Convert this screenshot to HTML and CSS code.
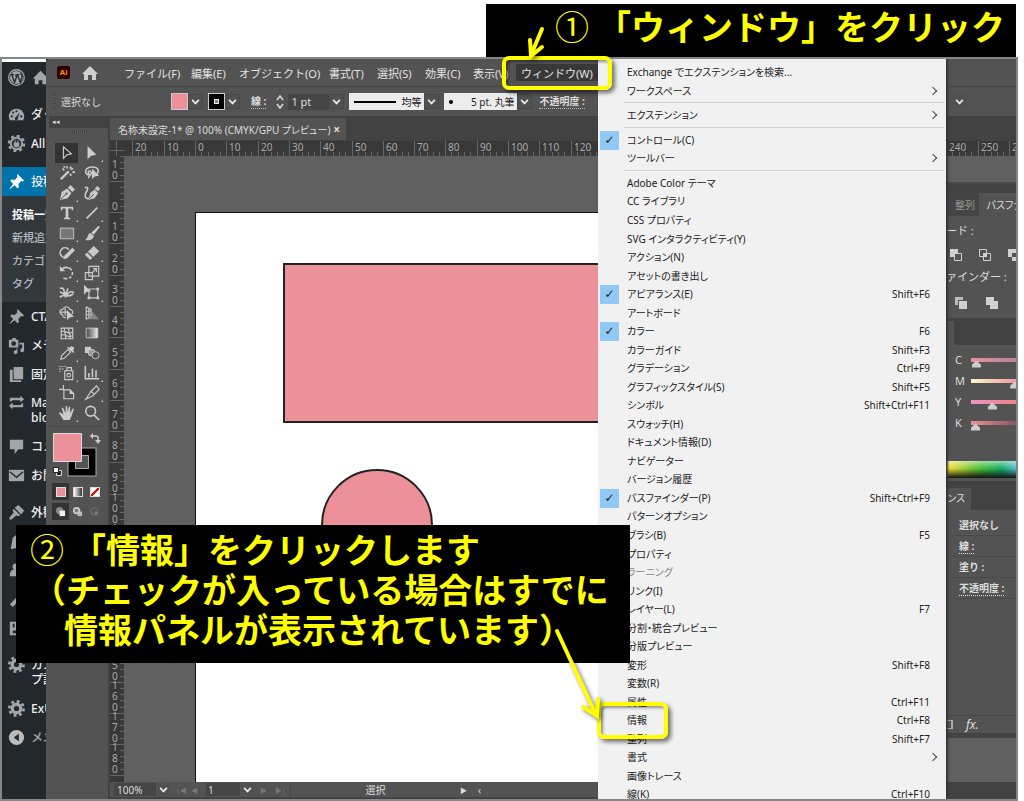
FILE: index.html
```html
<!DOCTYPE html>
<html lang="ja">
<head>
<meta charset="utf-8">
<title>情報パネルの表示</title>
<link rel="stylesheet" href="styles.css">
</head>
<body>
<main class="stage">
<div class="frame">
<nav class="wp">
  <a class="wp-row wp-top" href="#"><svg class="wi" viewBox="0 0 20 20"><circle cx="10" cy="10" r="8.2" fill="none" stroke="#a0a5aa" stroke-width="1.4"/><circle cx="10" cy="10" r="6.8" fill="#a0a5aa"/><path d="M3.5 7h4M9 7h4M5 7l3 8 2-5.500L9 7M11 7l3 8 2-6c0-2-1.500-2-1.500-4" fill="none" stroke="#23282d" stroke-width="1.400"/></svg><svg class="wi" viewBox="0 0 20 20"><path fill="#a0a5aa" d="M10 3l8 8h-2v6h-4v-4H8v4H4v-6H2z"/></svg></a>
  <a class="wp-row wp-dash" href="#"><svg class="wi" viewBox="0 0 20 20"><path fill="#a0a5aa" d="M10 4a8 8 0 0 0-7 12h14a8 8 0 0 0-7-12z"/><g fill="#23282d"><circle cx="5" cy="12" r="1.100"/><circle cx="6.500" cy="8" r="1.100"/><circle cx="10" cy="6.500" r="1.100"/><circle cx="15" cy="12" r="1.100"/><path d="M13.500 7.500l-2 6a1.700 1.700 0 1 1-2-1z"/></g></svg>ダッシュ</a>
  <a class="wp-row" href="#"><svg class="wi" viewBox="0 0 20 20"><circle cx="10" cy="10" r="6" fill="none" stroke="#a0a5aa" stroke-width="2"/><circle cx="10" cy="10" r="8" fill="none" stroke="#a0a5aa" stroke-width="2.500" stroke-dasharray="3.200 3.080"/><path fill="#a0a5aa" d="M7 9h6v2a3 3 0 0 1-6 0zM8 6h1v3H8zM11 6h1v3h-1z"/></svg>All in</a>
  <a class="wp-row wp-active" href="#"><svg class="wi" viewBox="0 0 20 20"><path fill="#fff" d="M11 2l7 7-1.500 1-1.500-.5-3 3 .5 3.500-1.500 1-3-3-5 4-.5-.5 4-5-3-3 1-1.500 3.500.5 3-3-.5-1.500z"/></svg>投稿</a>
  <div class="wp-sub"><a class="on" href="#">投稿一覧</a><a href="#">新規追加</a><a href="#">カテゴリー</a><a href="#">タグ</a></div>
  <a class="wp-row" href="#"><svg class="wi" viewBox="0 0 20 20"><path fill="#a0a5aa" d="M11 2l7 7-1.500 1-1.500-.5-3 3 .5 3.500-1.500 1-3-3-5 4-.5-.5 4-5-3-3 1-1.500 3.500.5 3-3-.5-1.500z"/></svg>CTA</a>
  <a class="wp-row" href="#"><svg class="wi" viewBox="0 0 20 20"><path fill="#a0a5aa" fill-rule="evenodd" d="M2 4h3l1-2h3l1 2h2v8H2zM7 5.500a2.500 2.500 0 1 0 0 5 2.500 2.500 0 0 0 0-5zM13 7h5v8a2 2 0 1 1-2-2V9h-3zM11 13v4a2 2 0 1 1-2-2h1v-2z"/></svg>メディア</a>
  <a class="wp-row" href="#"><svg class="wi" viewBox="0 0 20 20"><path fill="#a0a5aa" d="M7 2h10v13H7zM3 5h3v11h9v2H3z"/></svg>固定</a>
  <a class="wp-row wp-two" href="#"><svg class="wi" viewBox="0 0 20 20"><path fill="#a0a5aa" d="M3 9V5h11V3l4 3.500-4 3.500V7.500H5V9zM17 11v4H6v2l-4-3.500L6 10v2.500h9V11z"/></svg><span>Max<br>block</span></a>
  <a class="wp-row" href="#"><svg class="wi" viewBox="0 0 20 20"><path fill="#a0a5aa" d="M3 3h14v10h-5l-4 5v-5H3z"/></svg>コメント</a>
  <a class="wp-row" href="#"><svg class="wi" viewBox="0 0 20 20"><path fill="#a0a5aa" d="M2 4h16v12H2z"/><path d="M3 6l7 6 7-6" fill="none" stroke="#23282d" stroke-width="1.500"/></svg>お問</a>
  <a class="wp-row wp-gap" href="#"><svg class="wi" viewBox="0 0 20 20"><path fill="#a0a5aa" d="M12 2l6 6-3 4-7-7zM7 6l7 7-2 1-2-1-6 5-2-2 5-6-1-2z"/></svg>外観</a>
  <a class="wp-row" href="#" aria-label="プラグイン"><svg class="wi" viewBox="0 0 20 20"><path fill="#a0a5aa" d="M4 18l2-12 4-3 5 5v8z"/></svg></a>
  <a class="wp-row" href="#" aria-label="ユーザー"><svg class="wi" viewBox="0 0 20 20"><path fill="#a0a5aa" d="M10 3a3 3 0 0 1 2 6c4 0 5 3 5 7H3c0-4 1-7 5-7a3 3 0 0 1 2-6z"/></svg></a>
  <a class="wp-row" href="#" aria-label="ツール"><svg class="wi" viewBox="0 0 20 20"><path fill="#a0a5aa" d="M3 15l7-7a4 4 0 0 1 5-5l-2 3 2 2 3-2a4 4 0 0 1-5 5l-7 7z"/></svg></a>
  <a class="wp-row" href="#" aria-label="設定"><svg class="wi" viewBox="0 0 20 20"><path fill="#a0a5aa" fill-rule="evenodd" d="M3 3h14v14H3zM6 5v4h2V5zM6 12v3h8v-3z"/></svg></a>
  <a class="wp-row wp-two wp-gap" href="#"><svg class="wi" viewBox="0 0 20 20"><circle cx="10" cy="10" r="4.500" fill="none" stroke="#a0a5aa" stroke-width="3.500"/><circle cx="10" cy="10" r="7.500" fill="none" stroke="#a0a5aa" stroke-width="2.800" stroke-dasharray="3 2.890"/></svg><span>カス<br>プ設</span></a>
  <a class="wp-row" href="#"><svg class="wi" viewBox="0 0 20 20"><circle cx="10" cy="10" r="4.500" fill="none" stroke="#a0a5aa" stroke-width="3.500"/><circle cx="10" cy="10" r="7.500" fill="none" stroke="#a0a5aa" stroke-width="2.800" stroke-dasharray="3 2.890"/></svg>ExU</a>
  <a class="wp-row wp-dim" href="#"><svg class="wi" viewBox="0 0 20 20"><circle cx="10" cy="10" r="8" fill="#bbb"/><path d="M12.500 6v8L7 10z" fill="#23282d"/></svg>メニュー</a>
</nav>

<section class="app">
  <header class="menubar">
    <span class="ai">Ai</span>
    <button class="home" aria-label="ホーム"><svg width="18" height="16" viewBox="0 0 18 16"><path fill="#d0d0d0" d="M9 1l8 8h-2v6h-4v-5H7v5H3V9H1z"/></svg></button>
    <div class="menus"><button>ファイル(F)</button><button>編集(E)</button><button>オブジェクト(O)</button><button>書式(T)</button><button>選択(S)</button><button>効果(C)</button><button>表示(V)</button><button class="open">ウィンドウ(W)</button></div>
  </header>

  <div class="control">
    <span class="grip"></span><span class="nosel">選択なし</span>
    <button class="sw pink" aria-label="塗り"></button><button class="chev" aria-label="塗りを選択"></button>
    <button class="sw dark" aria-label="線の色"></button><button class="chev" aria-label="線の色を選択"></button>
    <label class="dotted" for="pt">線 :</label>
    <svg class="step" width="8" height="16" viewBox="0 0 8 16"><path d="M1 6l3-4 3 4M1 10l3 4 3-4" fill="none" stroke="#ddd" stroke-width="1.500"/></svg>
    <input id="pt" class="pt" value="1 pt"><button class="chev" aria-label="線幅"></button>
    <button class="profile"><i></i>均等</button><button class="chev" aria-label="プロファイル"></button>
    <button class="brush"><b></b>5 pt. 丸筆</button><button class="chev" aria-label="ブラシ"></button>
    <span class="dotted op">不透明度 :</span>
    <button class="chev far" aria-label="整列"></button>
  </div>

  <div class="work">
    <aside class="tools">
      <div class="tools-head">◂◂</div>
      <div class="tools-grip"></div>
      <div class="grid">
        <button class="t sel" aria-label="選択"><svg viewBox="0 0 18 18"><path d="M5 2v13l4-4 5-1z" class="o"/></svg></button>
        <button class="t c" aria-label="ダイレクト選択"><svg viewBox="0 0 18 18"><path d="M4 1v15l4-4 6-1z" class="f"/></svg></button>
        <button class="t" aria-label="自動選択"><svg viewBox="0 0 18 18"><path d="M2 16L11 7" class="o w3"/><path d="M9 1v3M15 8h3M14 2l-2 2M4 4l2 2M14 12l-2-2M6 1v2M13 5l3-1" class="o w2"/></svg></button>
        <button class="t" aria-label="なげなわ"><svg viewBox="0 0 18 18"><path d="M8 11c-5 1-7-2-6-5 2-5 13-5 14 0 0 2 0 3-2 5M6 10c-3-2 0-5 2-2s-3 3-3 7" class="o w2"/><path d="M9 4v12l3-3 5-1z" class="f"/></svg></button>
        <button class="t c" aria-label="ペン"><svg viewBox="0 0 18 18"><path d="M1 17l2-9 6-4 5 5-4 6zM10 3l3-3 5 5-3 3z" class="f"/><path d="M2 16l6-6" stroke="#535353"/><circle cx="8.500" cy="9.500" r="1.200" fill="#535353"/></svg></button>
        <button class="t" aria-label="曲線"><svg viewBox="0 0 18 18"><path d="M5 17l2-8 5-4 4 4-4 6zM12 4l3-3 3 3-2 3z" class="f"/><path d="M1 3c5-2 3 3 1 6-2 5 1 7 4 6" class="o w2"/><path d="M6 16l5-6" stroke="#535353"/></svg></button>
        <button class="t c" aria-label="文字"><svg viewBox="0 0 18 18"><path d="M2 2h14v4h-1.500L14 4h-3.500v10l2 .5V16h-7v-1.500l2-.5V4H4l-.5 2H2z" class="f"/></svg></button>
        <button class="t c" aria-label="直線"><svg viewBox="0 0 18 18"><path d="M3 15L15 3" class="o w2"/></svg></button>
        <button class="t c" aria-label="長方形"><svg viewBox="0 0 18 18"><path d="M1.500 3.500h15v12h-15z" fill="#777" stroke="#ccc"/></svg></button>
        <button class="t c" aria-label="ブラシ"><svg viewBox="0 0 18 18"><path d="M16 1l2 1-7 9-3-2zM7 9l4 3c0 4-5 6-10 5 3-1 3-7 6-8z" class="f"/></svg></button>
        <button class="t c" aria-label="Shaper"><svg viewBox="0 0 18 18"><path d="M10 13a5.500 5.500 0 1 1 1-8" class="o w2"/><path d="M5 16l1-4L15 3l3 3-9 9z" class="f"/></svg></button>
        <button class="t c" aria-label="消しゴム"><svg viewBox="0 0 18 18"><path d="M1 11L11 1l6 6-10 10z" class="f"/><path d="M4 8l6 6" stroke="#535353" stroke-width="1.500"/></svg></button>
        <button class="t c" aria-label="回転"><svg viewBox="0 0 18 18"><path d="M3 5c5-5 13-1 12 5-1 5-6 6-10 5" class="o w2" stroke-dasharray="13 2 3 2 3 2"/><path d="M1 1v6h6z" class="f"/></svg></button>
        <button class="t c" aria-label="拡大・縮小"><svg viewBox="0 0 18 18"><path d="M1.500 8.500h8v8h-8zM5.500 1.500h11v11h-11zM9 9l5-5M10 4h4v4" class="o"/></svg></button>
        <button class="t c" aria-label="線幅"><svg viewBox="0 0 18 18"><path d="M1 4c4-2 5 2 5 5s2 4 4 1 5-3 7-1M1 14c4-6 9 2 15-4M10 4l-3 10M1 8l5 2" class="o w2"/><circle cx="7" cy="10" r="2.500" class="f"/></svg></button>
        <button class="t c" aria-label="自由変形"><svg viewBox="0 0 18 18"><path d="M5.500 4.500h10v10h-10z" class="o"/><path d="M0 0v11l3-3 5-1zM14 3h3v3h-3zM14 13h3v3h-3zM4 13h3v3H4z" class="f"/></svg></button>
        <button class="t c" aria-label="シェイプ形成"><svg viewBox="0 0 18 18"><path d="M8 14c-2 1-4-1-4-3-4-1-4-6 0-6 2-4 7-4 8 0 3 0 4 2 3 5M1 8h9M7 3v9" class="o"/><path d="M9 6v11l3-3 5-1z" class="f"/></svg></button>
        <button class="t c" aria-label="遠近"><svg viewBox="0 0 18 18"><path d="M2.500 2v14M2 2l6 3v9l-6 2M5.500 4v11M2 7h6M2 11h6" class="o"/><path d="M9 7l8 9H4l5-3z" fill="#858585"/></svg></button>
        <button class="t" aria-label="メッシュ"><svg viewBox="0 0 18 18"><path d="M2.500 3.500h13v12h-13zM7 3c-4 4 3 8 0 12M12 3c-4 4 3 8 0 12M2 8c5-4 8 4 13 0M2 12c5-4 8 4 13 0" class="o"/></svg></button>
        <button class="t" aria-label="グラデーション"><svg viewBox="0 0 18 18"><defs><linearGradient id="gr"><stop stop-color="#444"/><stop offset="1" stop-color="#eee"/></linearGradient></defs><path d="M2.500 3.500h13v11h-13z" fill="url(#gr)" stroke="#ccc"/></svg></button>
        <button class="t c" aria-label="スポイト"><svg viewBox="0 0 18 18"><path d="M2 16l1-4 7-7 3 3-7 7z" class="o"/><path d="M9 3l1-1 2 1c2-4 7 0 4 3l1 2-1 1z" class="f"/></svg></button>
        <button class="t" aria-label="ブレンド"><svg viewBox="0 0 18 18"><path d="M1 2h7v7H1z" class="f"/><rect x="5" y="5" width="7" height="7" rx="2" fill="#999" stroke="#ccc"/><circle cx="13" cy="11.500" r="4" fill="#535353" stroke="#ccc"/></svg></button>
        <button class="t c" aria-label="シンボル"><svg viewBox="0 0 18 18"><path d="M6.500 6.500h9v10h-9zM9 6V3h5v3" class="o"/><circle cx="11" cy="11.500" r="2" class="o"/><path d="M0 1h2v1H0zM3 1h2v1H3zM6 1h2v1H6zM0 4h2v1H0zM3 4h2v1H3zM0 7h2v1H0z" class="f"/></svg></button>
        <button class="t c" aria-label="グラフ"><svg viewBox="0 0 18 18"><path d="M1.500 1v14.500H17M5.500 14V9M9.500 14V4M13.500 14V6" class="o w2"/></svg></button>
        <button class="t" aria-label="アートボード"><svg viewBox="0 0 18 18"><path d="M5 0v5H0M5.500 5.500h7l4 4v6h-11z" class="o"/><path d="M12 5v5h5z" class="f"/></svg></button>
        <button class="t c" aria-label="スライス"><svg viewBox="0 0 18 18"><path d="M2 16l6-9 6-6 3 4-7 7zM8 7l3 3" class="o"/></svg></button>
        <button class="t c" aria-label="手のひら"><svg viewBox="0 0 18 18"><path d="M5 17L0 9l1-1 4 3-2-8h1.500l3 6V1H9l1 7 1-6h1.500v7l3-5H17l-3 9-2 4z" class="f"/></svg></button>
        <button class="t" aria-label="ズーム"><svg viewBox="0 0 18 18"><circle cx="7.500" cy="7" r="5.500" class="o w2"/><path d="M11 11l6 6" class="o w2"/></svg></button>
      </div>
      <div class="colors">
        <svg viewBox="0 0 54 48" width="54" height="48"><path d="M20 20h20v20H20z" fill="none" stroke="#aaa" stroke-width="9"/><path d="M20 20h20v20H20z" fill="none" stroke="#000" stroke-width="7"/><path d="M23.500 23.500h13v13h-13z" fill="#535353" stroke="#aaa"/><path d="M1.500 1.500h28v28h-28z" fill="#ec919a" stroke="#ddd"/><path d="M41 4h3a2 2 0 0 1 2 2v3" fill="none" stroke="#ccc" stroke-width="1.500"/><path d="M41 1v6l-3-3zM43 8h6l-3 4z" fill="#ccc"/><path d="M4.500 38.500h5v5h-5z" fill="#222" stroke="#ddd"/><path d="M1.500 35.500h5v5h-5z" fill="#fff" stroke="#222"/></svg>
      </div>
      <div class="modes"><button class="on" aria-label="カラー"><i class="m1"></i></button><button aria-label="グラデーション"><i class="m2"></i></button><button aria-label="なし"><i class="m3"></i></button></div>
      <div class="modes low"><button class="on" aria-label="標準描画"><svg viewBox="0 0 12 12"><circle cx="5" cy="5" r="4" fill="#888"/><path d="M5 5h6v6H5z" fill="#eee"/></svg></button><button aria-label="背面描画"><svg viewBox="0 0 12 12"><path d="M6 6h5v5H6z" fill="#bbb"/><circle cx="5" cy="5" r="4" fill="#ccc"/><circle cx="5" cy="5" r="2" fill="#777"/></svg></button><button aria-label="内側描画"><svg viewBox="0 0 12 12"><circle cx="6" cy="6" r="4" fill="none" stroke="#777"/><path d="M6 6h3v3H6z" fill="#777"/></svg></button></div>
    </aside>

    <div class="doc">
      <div class="tabs"><div class="tab">名称未設定-1* @ 100% (CMYK/GPU プレビュー)<button aria-label="閉じる">×</button></div></div>
      <div class="hr"><svg id="hruler" width="100%" height="15"></svg></div>
      <div class="mid">
        <svg id="vruler" class="vr" width="14"></svg>
        <div class="canvas">
          <div class="artboard"></div>
          <div class="rect"></div>
          <div class="circle"></div>
        </div>
      </div>
      <footer class="status">
        <input class="zoom" aria-label="ズーム" value="100%"><button class="chev" aria-label="ズームを選択"></button>
        <span class="nav">|◀</span><span class="nav">◀</span>
        <input class="page" aria-label="アートボード番号" value="1"><button class="chev" aria-label="アートボードを選択"></button>
        <span class="nav">▶</span><span class="nav">▶|</span>
        <span class="mode">選択</span><span class="play">▶</span><span class="back">‹</span>
      </footer>
    </div>
  </div>

  <aside class="panels">
    <div class="bar"></div>
    <div class="ptabs"><button class="off">整列</button><button>パスファ</button></div>
    <div class="path">
      <span class="ptext">ード :</span>
      <div class="icons"><svg viewBox="0 0 14 14"><path d="M1 1h8v8H1z" fill="#d0d0d0"/><path d="M5.500 5.500h7v7h-7z" fill="#535353" stroke="#d0d0d0"/></svg><svg viewBox="0 0 14 14"><path d="M1.500 1.500h7v7h-7zM5.500 5.500h7v7h-7z" fill="none" stroke="#d0d0d0"/><path d="M5 5h4v4H5z" fill="#d0d0d0"/></svg><svg viewBox="0 0 14 14"><path d="M1 1h8v4h4v8H5V9H1zM5 5v4h4V5z" fill="#d0d0d0" fill-rule="evenodd"/></svg></div>
      <span class="ptext pf">ァインダー :</span>
      <div class="icons two"><svg viewBox="0 0 14 14"><path d="M1 1h8v3H4v5H1z" fill="#bbb"/><path d="M5 5h8v8H5z" fill="#d0d0d0"/></svg><svg viewBox="0 0 14 14"><path d="M1 1h8v4h4v8H5V9H1z" fill="#d0d0d0"/></svg></div>
    </div>
    <div class="ctab"></div>
    <div class="sliders">
      <label><span>C</span><input type="range" class="c1" min="0" max="100" value="1"></label>
      <label><span>M</span><input type="range" class="c2" min="0" max="100" value="44"></label>
      <label><span>Y</span><input type="range" class="c3" min="0" max="100" value="19"></label>
      <label><span>K</span><input type="range" class="c4" min="0" max="100" value="0"></label>
    </div>
    <div class="spectrum"></div>
    <div class="atab"><span>ランス</span></div>
    <div class="arows"><div>選択なし</div><div><u>線 :</u></div><div>塗り :</div><div><u>不透明度 :</u></div></div>
    <div class="afoot"><i></i><em>fx.</em></div>
  </aside>

  <div class="menu" role="menu">
    <button role="menuitem">Exchange でエクステンションを検索...</button>
    <button role="menuitem" class="sub">ワークスペース</button>
    <hr>
    <button role="menuitem" class="sub">エクステンション</button>
    <hr>
    <button role="menuitem" class="chk">コントロール(C)</button>
    <button role="menuitem" class="sub">ツールバー</button>
    <hr>
    <button role="menuitem">Adobe Color テーマ</button>
    <button role="menuitem">CC ライブラリ</button>
    <button role="menuitem">CSS プロパティ</button>
    <button role="menuitem">SVG インタラクティビティ(Y)</button>
    <button role="menuitem">アクション(N)</button>
    <button role="menuitem">アセットの書き出し</button>
    <button role="menuitem" class="chk">アピアランス(E)<kbd>Shift+F6</kbd></button>
    <button role="menuitem">アートボード</button>
    <button role="menuitem" class="chk">カラー<kbd>F6</kbd></button>
    <button role="menuitem">カラーガイド<kbd>Shift+F3</kbd></button>
    <button role="menuitem">グラデーション<kbd>Ctrl+F9</kbd></button>
    <button role="menuitem">グラフィックスタイル(S)<kbd>Shift+F5</kbd></button>
    <button role="menuitem">シンボル<kbd>Shift+Ctrl+F11</kbd></button>
    <button role="menuitem">スウォッチ(H)</button>
    <button role="menuitem">ドキュメント情報(D)</button>
    <button role="menuitem">ナビゲーター</button>
    <button role="menuitem">バージョン履歴</button>
    <button role="menuitem" class="chk">パスファインダー(P)<kbd>Shift+Ctrl+F9</kbd></button>
    <button role="menuitem">パターンオプション</button>
    <button role="menuitem">ブラシ(B)<kbd>F5</kbd></button>
    <button role="menuitem">プロパティ</button>
    <button role="menuitem" disabled>ラーニング</button>
    <button role="menuitem">リンク(I)</button>
    <button role="menuitem">レイヤー(L)<kbd>F7</kbd></button>
    <button role="menuitem">分割・統合プレビュー</button>
    <button role="menuitem">分版プレビュー</button>
    <button role="menuitem">変形<kbd>Shift+F8</kbd></button>
    <button role="menuitem">変数(R)</button>
    <button role="menuitem">属性<kbd>Ctrl+F11</kbd></button>
    <button role="menuitem">情報<kbd>Ctrl+F8</kbd></button>
    <button role="menuitem">整列<kbd>Shift+F7</kbd></button>
    <button role="menuitem" class="sub">書式</button>
    <button role="menuitem">画像トレース</button>
    <button role="menuitem">線(K)<kbd>Ctrl+F10</kbd></button>
  </div>
</section>
</div>

<div class="note one"><span>①</span>「ウィンドウ」をクリック</div>
<div class="note two"><p><span>②</span>「情報」をクリックします</p><p class="in1">（チェックが入っている場合はすでに</p><p class="in2">情報パネルが表示されています）</p></div>
<div class="mark m-win"></div>
<div class="mark m-info"></div>
<svg class="arrows" width="1024" height="801" viewBox="0 0 1024 801"><g fill="none" stroke="#ff0" stroke-width="4" stroke-linecap="round"><path d="M542 29l-11 26M530 40l1 16 11-9"/><path d="M557 631l39 84M583 707l14 9 1-17"/></g></svg>
</main>
<script src="script.js"></script>
</body>
</html>
```
FILE: styles.css
```css
* { box-sizing: border-box; }
body { margin: 0; background: #fff; font-family: "Noto Sans", "Noto Sans CJK JP", sans-serif; font-size: 11px; color: #ddd; }
button, input { font: inherit; color: inherit; border: 0; padding: 0; margin: 0; background: none; text-align: left; min-width: 0; white-space: nowrap; }
a { color: inherit; text-decoration: none; }
p { margin: 0; }
.stage { position: relative; height: 100vh; overflow: hidden; padding: 57px 6px 0 0; }
.frame { display: flex; height: 100%; border: 2px solid #868686; overflow: hidden; background: #23282d; }

.wp { width: 44px; flex: none; overflow: hidden; background: #23282d; border-top: 3px solid #fff; font-size: 12px; font-weight: 500; color: #eee; padding-left: 5px; }
.wp-row { display: flex; align-items: center; gap: 5px; height: 29px; white-space: nowrap; line-height: 15px; }
.wi { width: 19px; height: 19px; flex: none; }
.wp-dash { margin-top: 8px; }
.wp-active { background: #0073aa; margin: 9px 0 0 -5px; padding-left: 5px; }
.wp-top { height: 30px; }
.wp-sub { margin-left: -5px; padding: 6px 0 8px 10px; background: #32373c; color: #b4b9be; font-size: 11px; display: grid; grid-auto-rows: 23px; align-items: center; white-space: nowrap; }
.wp-sub .on { color: #fff; font-weight: 700; }
.wp-two { height: 43px; align-items: flex-start; padding-top: 6px; }
.wp-two .wi { margin-top: -2px; }
.wp-gap { margin-top: 8px; }
.wp-dim { color: #aaa; }

.app { position: relative; flex: 1; min-width: 0; display: flex; flex-direction: column; background: #535353; border-radius: 4px 0 0 0; }
.menubar { display: flex; align-items: center; height: 28px; padding-left: 11px; border-bottom: 1px solid #454545; flex: none; }
.ai { width: 13px; height: 13px; border-radius: 2px; background: #330000; color: #ff9a00; font: bold 8px/13px "Liberation Sans", sans-serif; text-align: center; }
.home { margin-left: 11px; width: 18px; height: 16px; }
.menus { display: grid; grid-template-columns: 67px 48px 90px 48px 48px 48px 43px 82px; margin-left: 25px; align-items: center; color: #e2e2e2; }
.menus .open { background: #383838; height: 17px; padding-left: 5px; }

.control { display: flex; align-items: center; height: 30px; flex: none; border-bottom: 1px solid #424242; padding-left: 7px; white-space: nowrap; }
.grip { width: 3px; height: 18px; background: repeating-linear-gradient(#444 0 1px, #5a5a5a 1px 2px); }
.nosel { width: 115px; padding-left: 5px; font-size: 10px; }
.sw { width: 17px; height: 17px; border: 1px solid #ccc; }
.sw.pink { background: #ec919a; }
.sw.dark { position: relative; background: #000; }
.sw.dark::after { content: ""; position: absolute; inset: 5px; border: 1px solid #eee; background: #888; }
.chev { width: 15px; height: 15px; flex: none; border: 1px solid #484848; background: #505050; display: grid; place-items: center; margin-right: 5px; }
.chev::before { content: ""; width: 5px; height: 5px; border: solid #eee; border-width: 0 2px 2px 0; transform: translateY(-1px) rotate(45deg) scale(.8); }
.dotted { border-bottom: 1px dotted #bbb; font-size: 10px; line-height: 14px; margin-left: 6px; font-weight: 700; }
.dotted.op { margin-left: 2px; }
.step { margin: 0 4px 0 10px; }
.pt { width: 41px; height: 16px; background: #454545; padding-left: 3px; }
.profile, .brush { display: flex; align-items: center; justify-content: space-between; width: 75px; height: 17px; background: #ececec; color: #222; font-size: 10px; padding: 0 3px 0 5px; }
.profile i { width: 42px; height: 2px; background: #000; }
.brush b { width: 4px; height: 4px; border-radius: 2px; background: #000; }
.brush { width: 73px; }
.far { margin-left: auto; margin-right: 49px; border: 0; }

.work { display: flex; flex: 1; min-height: 0; }
.tools { width: 62px; flex: none; margin-left: 2px; padding: 0 2px 0 1px; }
.tools-head { height: 11px; background: #424242; font-size: 7px; line-height: 10px; padding-left: 3px; }
.tools-grip { width: 17px; height: 3px; margin: 2px auto 10px 21px; background: repeating-linear-gradient(90deg, #444 0 1px, #5a5a5a 1px 2px); }
.grid { display: grid; grid-template-columns: 25px 25px; grid-auto-rows: 20px; padding-left: 5px; padding-bottom: 3px; border-bottom: 1px solid #484848; margin-right: 5px; }
.t { position: relative; display: grid; place-items: center; }
.t svg { width: 16px; height: 16px; }
.t.sel { background: #333; margin: 0 1px; }
.t.c::after { content: ""; position: absolute; right: 1px; bottom: 1px; border: 1px solid #ccc; border-color: transparent #ccc #ccc transparent; }
.o { fill: none; stroke: #cbcbcb; stroke-width: 1.3; }
.w2 { stroke-width: 1.8; }
.w3 { stroke-width: 2.6; }
.f { fill: #cbcbcb; }
.colors { padding: 5px 0 0 3px; height: 56px; }
.modes { display: grid; grid-template-columns: 17px 17px 17px; padding-left: 3px; height: 18px; }
.modes button { display: grid; place-items: center; height: 17px; }
.modes .on { background: #333; }
.modes i { width: 10px; height: 10px; border: 1px solid #ddd; }
.modes svg { width: 11px; height: 11px; }
.m1 { background: #ec919a; }
.m2 { background: linear-gradient(90deg, #fff, #333); }
.m3 { background: linear-gradient(135deg, #fff 38%, #e00 38% 62%, #fff 62%); }
.low { margin-top: 2px; }

.doc { flex: 1; min-width: 0; display: flex; flex-direction: column; box-shadow: -2px 0 #424242; }
.tabs { height: 24px; background: #424242; padding-top: 1px; flex: none; }
.tab { display: flex; justify-content: space-between; align-items: center; width: 236px; height: 22px; background: #535353; padding: 0 6px 0 8px; font-size: 10px; white-space: nowrap; font-feature-settings: "palt"; }
.tab button { font-weight: 700; font-size: 12px; }
.hr { height: 15px; background: #383838; flex: none; overflow: hidden; }
.hr svg { display: block; }
.mid { flex: 1; min-height: 0; display: flex; }
.vr { background: #383838; flex: none; height: 100%; }
.rl { fill: #aaa; font-size: 10px; }
.canvas { position: relative; flex: 1; overflow: hidden; background: #606060; }
.artboard { position: absolute; left: 71px; top: 56px; bottom: 0; width: 657px; background: #fff; border: 1px solid #111; border-bottom: 0; }
.rect { position: absolute; left: 159px; top: 107px; width: 480px; height: 160px; background: #ec919a; border: 2px solid #222; }
.circle { position: absolute; left: 197px; top: 313px; width: 112px; height: 112px; border-radius: 50%; background: #ec919a; border: 2px solid #222; }
.status { display: flex; align-items: center; height: 17px; flex: none; border-bottom: 2px solid #444; padding-left: 4px; font-size: 10px; }
.zoom { width: 42px; height: 13px; background: #454545; padding-left: 3px; }
.page { width: 34px; height: 13px; background: #454545; padding-left: 2px; }
.status .chev { height: 13px; border-color: #555; }
.nav { font-size: 7px; color: #777; width: 15px; }
.mode { width: 170px; text-align: center; border-left: 1px solid #484848; }
.play { font-size: 7px; width: 18px; }

.panels { position: absolute; right: 0; top: 123px; bottom: 0; width: 70px; overflow: hidden; display: flex; flex-direction: column; white-space: nowrap; background: #606060; }
.panels > * { flex: none; }
.bar { height: 11px; background: #424242; border-top: 2px solid #4a4a4a; }
.ptabs { display: flex; height: 23px; background: #535353; font-feature-settings: "palt"; font-size: 10px; }
.ptabs button { padding-left: 8px; }
.ptabs .off { background: #454545; width: 37px; padding-left: 9px; color: #999; }
.path { height: 105px; background: #535353; padding-top: 6px; display: flex; flex-direction: column; border-bottom: 3px solid #424242; }
.ptext { font-size: 11px; line-height: 18px; }
.icons { display: flex; gap: 15px; padding: 8px 0 6px 3px; }
.icons svg { width: 14px; height: 14px; flex: none; }
.icons.two { gap: 17px; padding-left: 8px; padding-top: 10px; }
.ctab { height: 24px; background: #424242; border-left: 8px solid #535353; }
.sliders { display: grid; grid-template-rows: repeat(4, 21px); height: 116px; padding: 4px 0 0 9px; background: #535353; }
.sliders label { display: grid; grid-template-columns: 16px 98px; align-items: center; }
.sliders input { appearance: none; height: 4px; }
.sliders input::-webkit-slider-thumb { appearance: none; width: 9px; height: 7px; background: #ccc; margin-top: 9px; clip-path: polygon(50% 0, 100% 60%, 100% 100%, 0 100%, 0 60%); }
.c1 { background: linear-gradient(90deg, #ec919a, #6b6fa8); }
.c2 { background: linear-gradient(90deg, #fbf6c8, #ec919a 50%, #e04080); }
.c3 { background: linear-gradient(90deg, #ee93c5, #e8703c); }
.c4 { background: linear-gradient(90deg, #ec919a, #111); }
.spectrum { height: 17px; background: linear-gradient(#fff8, transparent 45%, #111), linear-gradient(90deg, #fd3, #4b3 50%, #1a6 80%, #5bc); }
.atab { height: 32px; padding-top: 7px; background: #424242; border-top: 3px solid #535353; font-feature-settings: "palt"; font-size: 10px; }
.atab span { display: block; width: 25px; height: 22px; background: #535353; line-height: 20px; overflow: hidden; direction: rtl; padding-right: 6px; }
.arows { flex: 1; background: #535353; padding: 5px 0 0 6px; font-size: 10px; font-weight: 700; }
.arows div { height: 21px; border-bottom: 1px solid #4a4a4a; line-height: 20px; padding-left: 7px; }
.arows u { text-decoration: underline dotted; text-underline-offset: 3px; }
.afoot { display: flex; gap: 13px; align-items: center; height: 18px; margin-bottom: 66px; background: #535353; border-top: 1px solid #484848; box-shadow: 0 5px #444; font-size: 12px; }
.afoot i { width: 7px; height: 9px; border: solid #aaa; border-width: 1px 2px 1px 0; }
.panels::after { content: ""; position: absolute; left: 0; right: 0; bottom: 0; height: 17px; background: #424242; }

.menu { position: absolute; right: 70px; top: 0; bottom: -5px; width: 348px; padding-top: 4px; background: #f1f1f1; color: #222; display: flex; flex-direction: column; box-shadow: 2px 0 2px #333; font-feature-settings: "palt"; font-size: 10px; }
.menu button { position: relative; flex: 1; display: flex; justify-content: space-between; align-items: center; padding: 0 16px 0 29px; line-height: 16px; }
.menu hr { width: 320px; height: 1px; border: 0; background: #d0d0d0; margin: 2px 2px 3px auto; flex: none; }
.menu button:disabled { color: #888; }
.menu kbd { font: inherit; }
.sub::after { content: ""; width: 5px; height: 5px; border: solid #444; border-width: 1px 1px 0 0; transform: rotate(45deg); margin-right: -6px; }
.chk::before { content: "✓"; position: absolute; left: 2px; top: 0; width: 19px; height: 19px; background: #90c8f6; font: bold 12px/19px "DejaVu Sans", sans-serif; text-align: center; }

.note { position: absolute; background: #000; color: #ff0; font-family: "Noto Sans CJK JP", sans-serif; font-size: 34px; font-weight: 700; white-space: nowrap; }
.note span { margin-right: 8px; font-weight: 400; }
.one { left: 486px; right: 8px; top: 4px; height: 53px; padding-left: 69px; line-height: 44px; }
.two { left: 16px; top: 525px; width: 614px; padding: 4px 0 14px 14px; line-height: 40px; height: 138px; }
.in1 { padding-left: 2px; }
.in2 { padding-left: 34px; }
.mark { position: absolute; border: 4px solid #ff0; border-radius: 7px; box-shadow: 3px 3px 4px #0008, inset 2px 2px 3px #0006; }
.m-win { left: 502px; top: 56px; width: 110px; height: 34px; }
.m-info { left: 597px; top: 702px; width: 71px; height: 37px; }
.arrows { position: absolute; left: 0; top: 0; pointer-events: none; filter: drop-shadow(2px 2px 2px #0008); }
```
FILE: script.js
```js
const NS = "http://www.w3.org/2000/svg";
const STEP = 31.3;

function add(svg, name, attrs, text) {
  const el = document.createElementNS(NS, name);
  for (const key in attrs) el.setAttribute(key, attrs[key]);
  if (text !== undefined) el.textContent = text;
  svg.appendChild(el);
}

const h = document.getElementById("hruler");
for (let i = -2; i <= 26; i++) {
  const x = Math.round(85 + i * STEP);
  add(h, "path", { d: `M${x}.5 0V15`, stroke: "#666" });
  for (let k = 1; k < 5; k++) add(h, "path", { d: `M${Math.round(x + k * 6.26)}.5 11V15`, stroke: "#666" });
  add(h, "text", { x: x + 3, y: 10, class: "rl" }, Math.abs(i) * 10);
}
add(h, "path", { d: "M0 9.5H14M6.5 0V15", stroke: "#666" });

const v = document.getElementById("vruler");
for (let i = -1; i <= 18; i++) {
  const y = Math.round(56 + i * STEP);
  add(v, "path", { d: `M0 ${y}.5H14`, stroke: "#666" });
  for (let k = 1; k < 5; k++) add(v, "path", { d: `M10 ${Math.round(y - k * 6.26)}.5H14`, stroke: "#666" });
  const digits = String(Math.abs(i) * 10);
  [...digits].forEach((d, n) => add(v, "text", { x: 2, y: y - 2 - (digits.length - 1 - n) * 11, class: "rl" }, d));
}
```
